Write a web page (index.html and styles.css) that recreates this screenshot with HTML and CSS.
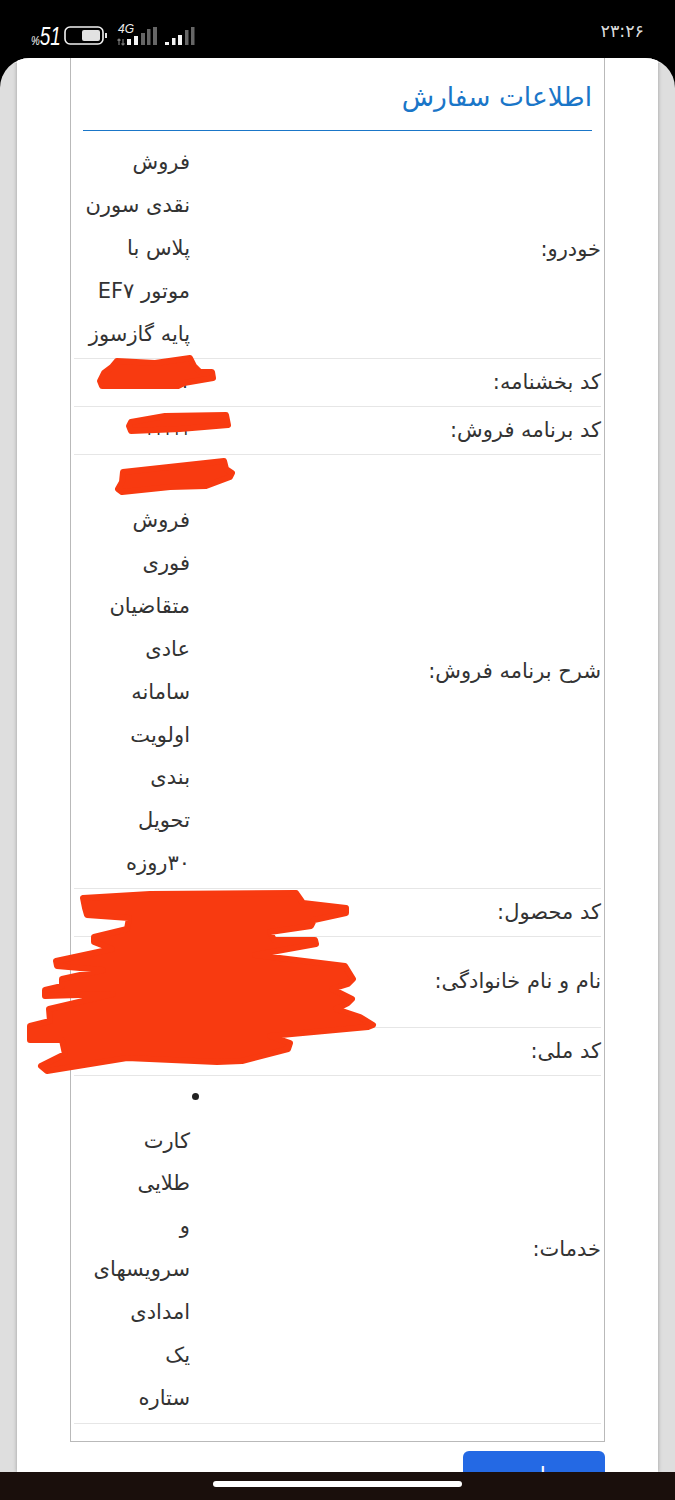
FILE: index.html
```html
<!DOCTYPE html>
<html lang="fa">
<head>
<meta charset="utf-8">
<title>اطلاعات سفارش</title>
<link rel="stylesheet" href="styles.css">
</head>
<body>
<div class="phone">
  <header class="status">
    <div class="status-left">
      <span class="pct"><small>%</small>51</span>
      <svg class="battery" width="44" height="20" viewBox="0 0 44 20"><rect x="1" y="1" width="38" height="17" rx="5" fill="none" stroke="#f2f2f2" stroke-width="1.6"/><rect x="18" y="4" width="18" height="11" rx="2" fill="#e2e2e2"/><rect x="41" y="7" width="2" height="5" fill="#e2e2e2"/></svg>
      <span class="net"><span class="g4">4G</span>
        <svg class="signal" width="80" height="22" viewBox="0 0 80 22">
          <path d="M2 14v6M0.5 15.500l1.500-1.500 1.500 1.500M6 14v6M4.500 18.500l1.500 1.500 1.500-1.500" stroke="#777" stroke-width="1.200" fill="none"/>
          <g fill="#f4f4f4"><rect x="10" y="14" width="4" height="6"/><rect x="17" y="11" width="4" height="9"/><rect x="48" y="17" width="4" height="3"/><rect x="55" y="13" width="3.500" height="7"/><rect x="61" y="10" width="4" height="10"/></g>
          <g fill="#666"><rect x="24" y="8" width="4" height="12"/><rect x="30" y="4" width="3.500" height="16"/><rect x="36" y="2" width="4" height="18"/><rect x="68" y="5" width="3.500" height="15"/><rect x="74" y="2" width="3.500" height="18"/></g>
        </svg>
      </span>
    </div>
    <span class="time">۲۳:۲۶</span>
  </header>

  <main class="sheet" dir="rtl">
    <div class="panel">
      <section class="card">
        <h1 class="title">اطلاعات سفارش</h1>
        <div class="rows">
          <div class="row"><div class="label">خودرو:</div><div class="value"><span>فروش</span><span>نقدی سورن</span><span>پلاس با</span><span>موتور EF۷</span><span>پایه گازسوز</span></div></div>
          <div class="row"><div class="label">کد بخشنامه:</div><div class="value"><span>۱۱۱۱</span></div></div>
          <div class="row"><div class="label">کد برنامه فروش:</div><div class="value"><span class="ticks">۱۱۱۱۱</span></div></div>
          <div class="row"><div class="label">شرح برنامه فروش:</div><div class="value"><span>۱۱۱۱</span><span>فروش</span><span>فوری</span><span>متقاضیان</span><span>عادی</span><span>سامانه</span><span>اولویت</span><span>بندی</span><span>تحویل</span><span>۳۰روزه</span></div></div>
          <div class="row"><div class="label">کد محصول:</div><div class="value"><span>۱۱۱۱</span></div></div>
          <div class="row"><div class="label">نام و نام خانوادگی:</div><div class="value"><span>۱۱۱۱</span><span>۱۱۱۱</span></div></div>
          <div class="row"><div class="label">کد ملی:</div><div class="value"><span>۱۱۱۱</span></div></div>
          <div class="row"><div class="label">خدمات:</div><div class="value"><span class="bullet"></span><span>کارت</span><span>طلایی</span><span>و</span><span>سرویسهای</span><span>امدادی</span><span>یک</span><span>ستاره</span></div></div>
        </div>
      </section>
      <div class="actions"><button class="submit" type="button">تایید</button></div>
    </div>
  </main>

  <footer class="navbar"><span class="home"></span></footer>

  <svg class="scribbles" width="675" height="1500" viewBox="0 0 675 1500" aria-hidden="true">
    <g fill="#f83a10" stroke="#f83a10" stroke-width="6" stroke-linejoin="round">
      <path d="M100 381 L104 373 L112 367 L117 361 L155 363 L190 358 L194 366 L200 372 L212 372 L213 378 L184 383 L178 386 L102 386Z"/>
      <path d="M129 426 L131 422 L165 416 L226 415 L228 425 L180 429 L131 431Z"/>
      <path d="M123 472 L224 461 L226 469 L232 473 L230 477 L206 486 L170 487 L122 492 L118 489 L122 482Z"/>
      <path d="M83 898 L150 894 L296 893 L303 903 L346 908 L346 913 L314 920 L311 926 L270 932 L274 940 L315 940 L316 944 L255 955 L345 966 L353 979 L348 984 L332 989 L352 999 L348 1003 L336 1009 L360 1017 L373 1025 L368 1027 L270 1036 L290 1043 L288 1049 L242 1061 L217 1062 L127 1058 L47 1071 L41 1066 L45 1064 L65 1054 L62 1040 L30 1040 L30 1026 L50 1021 L49 1009 L113 994 L45 996 L45 990 L62 986 L62 979 L103 970 L57 966 L56 961 L112 949 L94 942 L94 937 L127 929 L129 918 L87 915 L85 908Z"/>
    </g>
  </svg>
</div>
</body>
</html>
```
FILE: styles.css
```css
* { box-sizing: border-box; }
html, body { margin: 0; padding: 0; }
body { background: #000; font-family: "DejaVu Sans", "Noto Sans", sans-serif; color: #333; }
.phone { position: relative; width: 675px; height: 1500px; overflow: hidden; display: flex; flex-direction: column; background: #000; }

.status { height: 58px; flex: none; display: flex; justify-content: space-between; align-items: flex-start; padding: 0 31px; color: #fff; }
.status-left { display: flex; align-items: flex-start; padding-top: 23px; }
.pct { display: block; font: italic 400 25px/26px "Liberation Sans", sans-serif; width: 33px; white-space: nowrap; transform: scaleX(.76); transform-origin: left center; }
.pct small { font-size: 13px; }
.battery { margin-top: 3px; }
.net { position: relative; display: block; margin-left: 9px; }
.g4 { position: absolute; left: 1px; top: 0; font: italic 12px/12px "Liberation Sans", sans-serif; color: #eee; }
.signal { display: block; margin-top: 2px; }
.time { margin-top: 21px; font-size: 17.500px; line-height: 20px; letter-spacing: .6px; color: #dcdcdc; }

.sheet { flex: 1; min-height: 0; overflow: hidden; padding: 0 17px; background: linear-gradient(#fff 5px, #dedede 5px); border-radius: 30px 30px 0 0; }
.panel { height: 100%; background: #fff; box-shadow: 0 0 4px rgba(0, 0, 0, .3); overflow: hidden; }
.card { margin: 0 53px; border: 1px solid #b9b9b9; border-top: 0; padding: 0 3px 17px; }
.title { margin: 0 9px 9px; height: 73px; border-bottom: 1px solid #1a76c8; color: #1a76c8; font-size: 26.500px; font-weight: 400; line-height: 78px; }
.rows { display: flex; flex-direction: column; }
.row { display: grid; grid-template-columns: 411px 116px; align-items: center; border-bottom: 1px solid #e6e6e6; font-size: 21px; line-height: 42.900px; }
.value { padding: 1px 0 3px; }
.value span { display: block; height: 42.900px; white-space: nowrap; }
.value .ticks { font-size: 17px; }
.value .bullet { position: relative; }
.bullet::before { content: ""; position: absolute; top: 16px; right: -9px; width: 7px; height: 7px; border-radius: 50%; background: #222; }

.actions { margin: 9px 53px 0; display: flex; justify-content: flex-end; direction: ltr; }
.submit { width: 142px; height: 50px; border: 0; border-radius: 6px; background: #2469e4; color: #fff; font: 22px/50px "DejaVu Sans", sans-serif; padding: 0; }

.navbar { height: 28px; flex: none; background: #1a0f0c; display: flex; justify-content: center; padding-top: 9px; }
.home { width: 249px; height: 6px; border-radius: 3px; background: #fff; }
.scribbles { position: absolute; left: 0; top: 0; pointer-events: none; }
```
